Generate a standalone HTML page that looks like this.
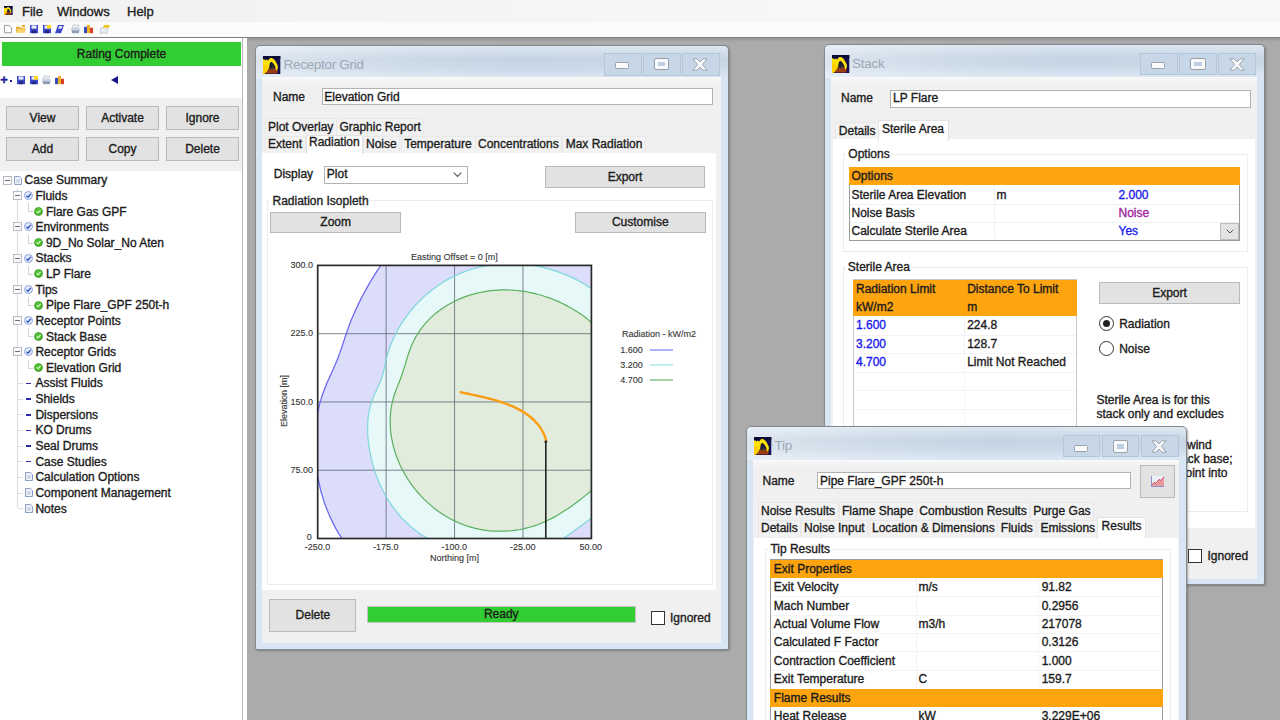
<!DOCTYPE html>
<html><head><meta charset="utf-8"><style>
*{box-sizing:border-box;margin:0;padding:0}
html,body{width:1280px;height:720px;overflow:hidden;background:#ababab;font-family:"Liberation Sans",sans-serif;font-size:12px;color:#1c1c1c;-webkit-text-stroke:0.35px}
.a{position:absolute;white-space:nowrap}
.t{position:absolute;white-space:nowrap;line-height:14px;height:14px}
.s{position:absolute;white-space:nowrap;line-height:10px;height:10px;font-size:9px;color:#333;-webkit-text-stroke:0.1px}
.btn{position:absolute;background:#e2e2e2;border:1px solid #bababa;text-align:center;white-space:nowrap}
.inp{position:absolute;background:#fff;border:1px solid #b2b2b2}
.win{position:absolute;border:1.3px solid #858a90;box-shadow:1px 1px 2px rgba(70,70,70,.45);border-radius:5px 5px 2px 2px;background:linear-gradient(90deg,rgba(255,255,255,.38) 0,rgba(255,255,255,.12) 30%,rgba(255,255,255,0) 55%,rgba(255,255,255,.06) 100%) 0 0/100% 33px no-repeat,linear-gradient(#dbe6f1 0px,#c5d4e3 13px,#c9d8e7 22px,#d9e5f1 31px,#d8e5f3 32px)}
.wc{position:absolute;background:linear-gradient(#f9f9f9 0,#f0f0f0 7px)}
.wb{position:absolute;background:#c7d7e8;border:1px solid #b3c6da}
.ttl{-webkit-text-stroke:0;position:absolute;font-size:13.5px;color:#9ba8b5;white-space:nowrap;letter-spacing:-0.3px;line-height:16px}
.page{position:absolute;background:#fff}
.org{position:absolute;background:#fda40f}
.blue{color:#1a1aee}
.tab{position:absolute;white-space:nowrap;line-height:14px;height:17px;border:1px solid #e6e6e6;border-bottom:none;background:#f1f1f1}
svg{position:absolute;overflow:visible}
</style></head><body>
<div class="a" style="left:0px;top:0px;width:1280px;height:22px;background:linear-gradient(90deg,#f1f1f1,#f7f7f7 60%);"></div>
<div class="a" style="left:0px;top:22px;width:1280px;height:15px;background:#fbfbfb;"></div>
<div class="a" style="left:0px;top:36.6px;width:1280px;height:1.6px;background:#7f7f7f;"></div>
<div class="a" style="left:247px;top:38px;width:1033px;height:4px;background:linear-gradient(#969696,#ababab);"></div>
<div class="t" style="left:22px;top:3.5px;font-size:13px;line-height:16px;height:16px">File</div>
<div class="t" style="left:57px;top:3.5px;font-size:13px;line-height:16px;height:16px">Windows</div>
<div class="t" style="left:127px;top:3.5px;font-size:13px;line-height:16px;height:16px">Help</div>
<svg style="left:4px;top:6px" width="8.65" height="9" viewBox="0 0 17.3 18" preserveAspectRatio="none"><rect width="17.3" height="18" fill="#15114f"/><rect width="17.3" height="3" fill="#0b0b38"/><path d="M7.2 6.8 L9.4 6.4 L11.8 9.6 L12.7 12.8 L13 15 L6 15 Z" fill="#1c1a30"/><path d="M4.6 14 L6.6 12.3 L9 13.2 L10.5 11.5 L12.5 13.3 L14.9 14.4 L14.2 17.4 L2.6 17.4 Z" fill="#9a3c12"/><path d="M8.2 13.2 L9.6 9 L10.6 13.4 Z" fill="#3a3a40"/><path d="M0 3.6 L1.2 3.2 L2.3 4.5 L3.5 3.4 L5.1 4.4 L6.2 2.9 C7 2.2 7.4 2.1 7.8 2.1 C9 2 10 2.6 10.9 3.3 C12 4.2 12.8 5.4 13.2 6.4 C14.2 8 14.8 9.2 14.8 10.3 C15 11.6 14.8 12.8 14.4 13.8 L13.2 14.6 C13 13.8 12.8 13.2 12.5 12.6 C12.4 11.4 12.2 10.4 11.7 9.5 C11 8.2 10.2 7.2 9.3 6.4 C8.6 6 8 6 7.4 6.4 C7 7 6.7 7.6 6.6 8.4 C6.4 9.4 6.3 10.4 6.2 11.5 C6 12.3 5.6 12.9 5.1 13.4 L3.9 15.4 L2.3 16.9 L0.8 18 L0 18 Z" fill="#ffe205"/><path d="M0 9 L3 8 L5 11 L4.5 13.5 L2.3 16.9 L0.8 18 L0 18 Z" fill="#ffd000"/></svg>
<svg style="left:4px;top:25px" width="8" height="8.2" preserveAspectRatio="none" viewBox="0 0 8 9"><path d="M0.5 0.5 H5 L7.5 3 V8.5 H0.5Z" fill="#fff" stroke="#9a9aa5" stroke-width="1"/></svg>
<svg style="left:16px;top:25px" width="10" height="8.2" preserveAspectRatio="none" viewBox="0 0 10 9"><path d="M0 2 H4 L5 3 H9 V8 H0Z" fill="#e8b43a"/><path d="M1.5 4 H10 L8.5 8.5 H0Z" fill="#f6d36a"/><rect x="6" y="0" width="3" height="2" fill="#f2a020"/></svg>
<svg style="left:30px;top:25px" width="8" height="8.2" preserveAspectRatio="none" viewBox="0 0 8 9"><rect width="8" height="9" fill="#3a46c8"/><rect x="1.5" y="0.5" width="5" height="3.5" fill="#e8ecff"/><rect x="2" y="6" width="4" height="3" fill="#23297a"/></svg>
<svg style="left:43px;top:25px" width="8" height="8.2" preserveAspectRatio="none" viewBox="0 0 8 9"><rect width="8" height="9" fill="#3a46c8"/><rect x="1.5" y="0.5" width="5" height="3.5" fill="#e8ecff"/><rect x="4" y="0" width="4" height="4" fill="#ffd820"/><rect x="2" y="6" width="4" height="3" fill="#23297a"/></svg>
<svg style="left:55px;top:25px" width="9" height="8.2" preserveAspectRatio="none" viewBox="0 0 9 9"><path d="M3 0 H9 L6 9 H0Z" fill="#3a46c8"/><path d="M4 1 H7.5 L6.5 4 H3Z" fill="#dfe4ff"/></svg>
<svg style="left:71px;top:25px" width="9" height="8.2" preserveAspectRatio="none" viewBox="0 0 9 9"><path d="M2 0 H8 L7 3 H1Z" fill="#f4f6fa" stroke="#a8b0c0" stroke-width=".6"/><path d="M0 3.5 H9 V7 H0Z" fill="#c9d2e2"/><path d="M1 6 H8 V9 H1Z" fill="#8e9bb8"/></svg>
<svg style="left:84px;top:25px" width="9" height="8.2" preserveAspectRatio="none" viewBox="0 0 9 9"><rect x="0" y="2" width="3" height="7" fill="#3b48c0"/><rect x="3" y="0" width="3" height="9" fill="#f0b020"/><rect x="6" y="3" width="3" height="6" fill="#d8402a"/></svg>
<svg style="left:100px;top:25px" width="10" height="8.2" preserveAspectRatio="none" viewBox="0 0 10 9"><path d="M1 3 H8 L7 9 H0Z" fill="#e9edf6" stroke="#a9b2c6" stroke-width=".6"/><path d="M4 0 H10 L9 3 H3Z" fill="#f2c81e"/></svg>
<div class="a" style="left:0px;top:38px;width:247px;height:682px;background:#fff;"></div>
<div class="a" style="left:242px;top:38px;width:1px;height:682px;background:#b9b9b9;"></div>
<div class="a" style="left:0px;top:98px;width:242px;height:73px;background:#f0f0f0;"></div>
<div class="a" style="left:2px;top:41.6px;width:239px;height:24.2px;background:#32cd32;text-align:center;line-height:25px">Rating Complete</div>
<div class="a" style="left:0.3px;top:73.3px;font-size:13px;font-weight:bold;color:#1a1a9a;line-height:14px">+</div>
<div class="a" style="left:10px;top:80px;width:2px;height:2px;background:#1a1a9a;"></div>
<svg style="left:17px;top:76px" width="8" height="8.2" preserveAspectRatio="none" viewBox="0 0 8 9"><rect width="8" height="9" fill="#3a46c8"/><rect x="1.5" y="0.5" width="5" height="3.5" fill="#e8ecff"/><rect x="2" y="6" width="4" height="3" fill="#23297a"/></svg>
<svg style="left:30px;top:76px" width="8" height="8.2" preserveAspectRatio="none" viewBox="0 0 8 9"><rect width="8" height="9" fill="#3a46c8"/><rect x="1.5" y="0.5" width="5" height="3.5" fill="#e8ecff"/><rect x="4" y="0" width="4" height="4" fill="#ffd820"/><rect x="2" y="6" width="4" height="3" fill="#23297a"/></svg>
<svg style="left:42px;top:76px" width="9" height="8.2" preserveAspectRatio="none" viewBox="0 0 9 9"><path d="M2 0 H8 L7 3 H1Z" fill="#f4f6fa" stroke="#a8b0c0" stroke-width=".6"/><path d="M0 3.5 H9 V7 H0Z" fill="#c9d2e2"/><path d="M1 6 H8 V9 H1Z" fill="#8e9bb8"/></svg>
<svg style="left:55px;top:76px" width="9" height="8.2" preserveAspectRatio="none" viewBox="0 0 9 9"><rect x="0" y="2" width="3" height="7" fill="#3b48c0"/><rect x="3" y="0" width="3" height="9" fill="#f0b020"/><rect x="6" y="3" width="3" height="6" fill="#d8402a"/></svg>
<svg style="left:111px;top:76px" width="7" height="8" viewBox="0 0 7 8"><path d="M7 0 V8 L0 4Z" fill="#17178f"/></svg>
<div class="btn" style="left:6px;top:106px;width:73px;height:24px;line-height:22px">View</div>
<div class="btn" style="left:86px;top:106px;width:73px;height:24px;line-height:22px">Activate</div>
<div class="btn" style="left:166px;top:106px;width:73px;height:24px;line-height:22px">Ignore</div>
<div class="btn" style="left:6px;top:137px;width:73px;height:24px;line-height:22px">Add</div>
<div class="btn" style="left:86px;top:137px;width:73px;height:24px;line-height:22px">Copy</div>
<div class="btn" style="left:166px;top:137px;width:73px;height:24px;line-height:22px">Delete</div>
<div class="a" style="left:17px;top:188px;width:1px;height:320px;background:#dcdcdc;"></div>
<div class="a" style="left:2.5px;top:175.5px;width:9px;height:9px;border:1px solid #b8bcc4;background:#fafafa"></div>
<div class="a" style="left:4.5px;top:179.5px;width:5px;height:1px;background:#6a7080;"></div>
<svg style="left:14px;top:175.5px" width="8" height="9" viewBox="0 0 8 9"><path d="M0.5 0.5 H5.5 L7.5 2.5 V8.5 H0.5Z" fill="#eef2fb" stroke="#8fa0c8" stroke-width="1"/><path d="M2 4H6M2 6H6" stroke="#a9b6d6" stroke-width=".8"/></svg>
<div class="t" style="left:24.6px;top:173.3px;">Case Summary</div>
<div class="a" style="left:12.5px;top:191.13px;width:9px;height:9px;border:1px solid #b8bcc4;background:#fafafa"></div>
<div class="a" style="left:14.5px;top:195.13px;width:5px;height:1px;background:#6a7080;"></div>
<svg style="left:24px;top:191.13px" width="9" height="9" viewBox="0 0 9 9"><circle cx="4.5" cy="4.5" r="4" fill="#e4ecfb" stroke="#8ea4d8" stroke-width="1"/><path d="M2.4 4.6 L4 6.2 L6.8 2.8" fill="none" stroke="#2a4fc0" stroke-width="1.3"/></svg>
<div class="t" style="left:35.4px;top:188.93px;">Fluids</div>
<div class="a" style="left:28px;top:203.26px;width:1px;height:8px;background:#d4d4d4;"></div>
<div class="a" style="left:28px;top:211.26px;width:5px;height:1px;background:#d4d4d4;"></div>
<svg style="left:34px;top:206.76px" width="9" height="9" viewBox="0 0 9 9"><circle cx="4.5" cy="4.5" r="4.3" fill="#2f8f1c"/><circle cx="4.4" cy="4.3" r="3.5" fill="#4fc030"/><path d="M2.6 4.4 L4 5.8 L6.6 2.9" fill="none" stroke="#e8ffd8" stroke-width="1.3" opacity=".85"/></svg>
<div class="t" style="left:45.9px;top:204.56px;">Flare Gas GPF</div>
<div class="a" style="left:12.5px;top:222.39px;width:9px;height:9px;border:1px solid #b8bcc4;background:#fafafa"></div>
<div class="a" style="left:14.5px;top:226.39px;width:5px;height:1px;background:#6a7080;"></div>
<svg style="left:24px;top:222.39px" width="9" height="9" viewBox="0 0 9 9"><circle cx="4.5" cy="4.5" r="4" fill="#e4ecfb" stroke="#8ea4d8" stroke-width="1"/><path d="M2.4 4.6 L4 6.2 L6.8 2.8" fill="none" stroke="#2a4fc0" stroke-width="1.3"/></svg>
<div class="t" style="left:35.4px;top:220.19px;">Environments</div>
<div class="a" style="left:28px;top:234.52px;width:1px;height:8px;background:#d4d4d4;"></div>
<div class="a" style="left:28px;top:242.52px;width:5px;height:1px;background:#d4d4d4;"></div>
<svg style="left:34px;top:238.02px" width="9" height="9" viewBox="0 0 9 9"><circle cx="4.5" cy="4.5" r="4.3" fill="#2f8f1c"/><circle cx="4.4" cy="4.3" r="3.5" fill="#4fc030"/><path d="M2.6 4.4 L4 5.8 L6.6 2.9" fill="none" stroke="#e8ffd8" stroke-width="1.3" opacity=".85"/></svg>
<div class="t" style="left:45.9px;top:235.82px;">9D_No Solar_No Aten</div>
<div class="a" style="left:12.5px;top:253.65px;width:9px;height:9px;border:1px solid #b8bcc4;background:#fafafa"></div>
<div class="a" style="left:14.5px;top:257.65px;width:5px;height:1px;background:#6a7080;"></div>
<svg style="left:24px;top:253.65px" width="9" height="9" viewBox="0 0 9 9"><circle cx="4.5" cy="4.5" r="4" fill="#e4ecfb" stroke="#8ea4d8" stroke-width="1"/><path d="M2.4 4.6 L4 6.2 L6.8 2.8" fill="none" stroke="#2a4fc0" stroke-width="1.3"/></svg>
<div class="t" style="left:35.4px;top:251.45px;">Stacks</div>
<div class="a" style="left:28px;top:265.78px;width:1px;height:8px;background:#d4d4d4;"></div>
<div class="a" style="left:28px;top:273.78px;width:5px;height:1px;background:#d4d4d4;"></div>
<svg style="left:34px;top:269.28px" width="9" height="9" viewBox="0 0 9 9"><circle cx="4.5" cy="4.5" r="4.3" fill="#2f8f1c"/><circle cx="4.4" cy="4.3" r="3.5" fill="#4fc030"/><path d="M2.6 4.4 L4 5.8 L6.6 2.9" fill="none" stroke="#e8ffd8" stroke-width="1.3" opacity=".85"/></svg>
<div class="t" style="left:45.9px;top:267.08px;">LP Flare</div>
<div class="a" style="left:12.5px;top:284.91px;width:9px;height:9px;border:1px solid #b8bcc4;background:#fafafa"></div>
<div class="a" style="left:14.5px;top:288.91px;width:5px;height:1px;background:#6a7080;"></div>
<svg style="left:24px;top:284.91px" width="9" height="9" viewBox="0 0 9 9"><circle cx="4.5" cy="4.5" r="4" fill="#e4ecfb" stroke="#8ea4d8" stroke-width="1"/><path d="M2.4 4.6 L4 6.2 L6.8 2.8" fill="none" stroke="#2a4fc0" stroke-width="1.3"/></svg>
<div class="t" style="left:35.4px;top:282.71px;">Tips</div>
<div class="a" style="left:28px;top:297.04px;width:1px;height:8px;background:#d4d4d4;"></div>
<div class="a" style="left:28px;top:305.04px;width:5px;height:1px;background:#d4d4d4;"></div>
<svg style="left:34px;top:300.54px" width="9" height="9" viewBox="0 0 9 9"><circle cx="4.5" cy="4.5" r="4.3" fill="#2f8f1c"/><circle cx="4.4" cy="4.3" r="3.5" fill="#4fc030"/><path d="M2.6 4.4 L4 5.8 L6.6 2.9" fill="none" stroke="#e8ffd8" stroke-width="1.3" opacity=".85"/></svg>
<div class="t" style="left:45.9px;top:298.34px;">Pipe Flare_GPF 250t-h</div>
<div class="a" style="left:12.5px;top:316.17px;width:9px;height:9px;border:1px solid #b8bcc4;background:#fafafa"></div>
<div class="a" style="left:14.5px;top:320.17px;width:5px;height:1px;background:#6a7080;"></div>
<svg style="left:24px;top:316.17px" width="9" height="9" viewBox="0 0 9 9"><circle cx="4.5" cy="4.5" r="4" fill="#e4ecfb" stroke="#8ea4d8" stroke-width="1"/><path d="M2.4 4.6 L4 6.2 L6.8 2.8" fill="none" stroke="#2a4fc0" stroke-width="1.3"/></svg>
<div class="t" style="left:35.4px;top:313.97px;">Receptor Points</div>
<div class="a" style="left:28px;top:328.3px;width:1px;height:8px;background:#d4d4d4;"></div>
<div class="a" style="left:28px;top:336.3px;width:5px;height:1px;background:#d4d4d4;"></div>
<svg style="left:34px;top:331.8px" width="9" height="9" viewBox="0 0 9 9"><circle cx="4.5" cy="4.5" r="4.3" fill="#2f8f1c"/><circle cx="4.4" cy="4.3" r="3.5" fill="#4fc030"/><path d="M2.6 4.4 L4 5.8 L6.6 2.9" fill="none" stroke="#e8ffd8" stroke-width="1.3" opacity=".85"/></svg>
<div class="t" style="left:45.9px;top:329.6px;">Stack Base</div>
<div class="a" style="left:12.5px;top:347.43px;width:9px;height:9px;border:1px solid #b8bcc4;background:#fafafa"></div>
<div class="a" style="left:14.5px;top:351.43px;width:5px;height:1px;background:#6a7080;"></div>
<svg style="left:24px;top:347.43px" width="9" height="9" viewBox="0 0 9 9"><circle cx="4.5" cy="4.5" r="4" fill="#e4ecfb" stroke="#8ea4d8" stroke-width="1"/><path d="M2.4 4.6 L4 6.2 L6.8 2.8" fill="none" stroke="#2a4fc0" stroke-width="1.3"/></svg>
<div class="t" style="left:35.4px;top:345.23px;">Receptor Grids</div>
<div class="a" style="left:28px;top:359.56px;width:1px;height:8px;background:#d4d4d4;"></div>
<div class="a" style="left:28px;top:367.56px;width:5px;height:1px;background:#d4d4d4;"></div>
<svg style="left:34px;top:363.06px" width="9" height="9" viewBox="0 0 9 9"><circle cx="4.5" cy="4.5" r="4.3" fill="#2f8f1c"/><circle cx="4.4" cy="4.3" r="3.5" fill="#4fc030"/><path d="M2.6 4.4 L4 5.8 L6.6 2.9" fill="none" stroke="#e8ffd8" stroke-width="1.3" opacity=".85"/></svg>
<div class="t" style="left:45.9px;top:360.86px;">Elevation Grid</div>
<div class="a" style="left:18px;top:383.19px;width:5px;height:1px;background:#dcdcdc;"></div>
<div class="a" style="left:25.5px;top:382.69px;width:5px;height:1.6px;background:#2a2aa8;"></div>
<div class="t" style="left:35.4px;top:376.49px;">Assist Fluids</div>
<div class="a" style="left:18px;top:398.82px;width:5px;height:1px;background:#dcdcdc;"></div>
<div class="a" style="left:25.5px;top:398.32px;width:5px;height:1.6px;background:#2a2aa8;"></div>
<div class="t" style="left:35.4px;top:392.12px;">Shields</div>
<div class="a" style="left:18px;top:414.45px;width:5px;height:1px;background:#dcdcdc;"></div>
<div class="a" style="left:25.5px;top:413.95px;width:5px;height:1.6px;background:#2a2aa8;"></div>
<div class="t" style="left:35.4px;top:407.75px;">Dispersions</div>
<div class="a" style="left:18px;top:430.08px;width:5px;height:1px;background:#dcdcdc;"></div>
<div class="a" style="left:25.5px;top:429.58px;width:5px;height:1.6px;background:#2a2aa8;"></div>
<div class="t" style="left:35.4px;top:423.38px;">KO Drums</div>
<div class="a" style="left:18px;top:445.71px;width:5px;height:1px;background:#dcdcdc;"></div>
<div class="a" style="left:25.5px;top:445.21px;width:5px;height:1.6px;background:#2a2aa8;"></div>
<div class="t" style="left:35.4px;top:439.01px;">Seal Drums</div>
<div class="a" style="left:18px;top:461.34px;width:5px;height:1px;background:#dcdcdc;"></div>
<div class="a" style="left:25.5px;top:460.84px;width:5px;height:1.6px;background:#2a2aa8;"></div>
<div class="t" style="left:35.4px;top:454.64px;">Case Studies</div>
<div class="a" style="left:18px;top:476.97px;width:5px;height:1px;background:#dcdcdc;"></div>
<svg style="left:24.5px;top:472.47px" width="8" height="9" viewBox="0 0 8 9"><path d="M0.5 0.5 H5.5 L7.5 2.5 V8.5 H0.5Z" fill="#eef2fb" stroke="#8fa0c8" stroke-width="1"/><path d="M2 4H6M2 6H6" stroke="#a9b6d6" stroke-width=".8"/></svg>
<div class="t" style="left:35.4px;top:470.27px;">Calculation Options</div>
<div class="a" style="left:18px;top:492.6px;width:5px;height:1px;background:#dcdcdc;"></div>
<svg style="left:24.5px;top:488.1px" width="8" height="9" viewBox="0 0 8 9"><path d="M0.5 0.5 H5.5 L7.5 2.5 V8.5 H0.5Z" fill="#eef2fb" stroke="#8fa0c8" stroke-width="1"/><path d="M2 4H6M2 6H6" stroke="#a9b6d6" stroke-width=".8"/></svg>
<div class="t" style="left:35.4px;top:485.9px;">Component Management</div>
<div class="a" style="left:18px;top:508.23px;width:5px;height:1px;background:#dcdcdc;"></div>
<svg style="left:24.5px;top:503.73px" width="8" height="9" viewBox="0 0 8 9"><path d="M0.5 0.5 H5.5 L7.5 2.5 V8.5 H0.5Z" fill="#eef2fb" stroke="#8fa0c8" stroke-width="1"/><path d="M2 4H6M2 6H6" stroke="#a9b6d6" stroke-width=".8"/></svg>
<div class="t" style="left:35.4px;top:501.53px;">Notes</div>
<div class="win" style="left:255px;top:45px;width:473.7px;height:605.3px"></div>
<svg style="left:263.2px;top:55.6px" width="17.3" height="18" viewBox="0 0 17.3 18" preserveAspectRatio="none"><rect width="17.3" height="18" fill="#15114f"/><rect width="17.3" height="3" fill="#0b0b38"/><path d="M7.2 6.8 L9.4 6.4 L11.8 9.6 L12.7 12.8 L13 15 L6 15 Z" fill="#1c1a30"/><path d="M4.6 14 L6.6 12.3 L9 13.2 L10.5 11.5 L12.5 13.3 L14.9 14.4 L14.2 17.4 L2.6 17.4 Z" fill="#9a3c12"/><path d="M8.2 13.2 L9.6 9 L10.6 13.4 Z" fill="#3a3a40"/><path d="M0 3.6 L1.2 3.2 L2.3 4.5 L3.5 3.4 L5.1 4.4 L6.2 2.9 C7 2.2 7.4 2.1 7.8 2.1 C9 2 10 2.6 10.9 3.3 C12 4.2 12.8 5.4 13.2 6.4 C14.2 8 14.8 9.2 14.8 10.3 C15 11.6 14.8 12.8 14.4 13.8 L13.2 14.6 C13 13.8 12.8 13.2 12.5 12.6 C12.4 11.4 12.2 10.4 11.7 9.5 C11 8.2 10.2 7.2 9.3 6.4 C8.6 6 8 6 7.4 6.4 C7 7 6.7 7.6 6.6 8.4 C6.4 9.4 6.3 10.4 6.2 11.5 C6 12.3 5.6 12.9 5.1 13.4 L3.9 15.4 L2.3 16.9 L0.8 18 L0 18 Z" fill="#ffe205"/><path d="M0 9 L3 8 L5 11 L4.5 13.5 L2.3 16.9 L0.8 18 L0 18 Z" fill="#ffd000"/></svg>
<div class="ttl" style="left:283.5px;top:57.3px">Receptor Grid</div>
<div class="wb" style="left:604px;top:52.5px;width:37.5px;height:23.2px"></div>
<div class="a" style="left:615.25px;top:62.3px;width:14px;height:7px;background:#fafafa;border:1px solid #9aa3ad;border-radius:1.5px"></div>
<div class="wb" style="left:642.5px;top:52.5px;width:38px;height:23.2px"></div>
<div class="a" style="left:654.9px;top:58.5px;width:13.6px;height:10.6px;background:#bccfe3;border:3px solid #fafafa;outline:1px solid #9aa3ad;border-radius:1px"></div>
<div class="wb" style="left:681.5px;top:52.5px;width:38.5px;height:23.2px"></div>
<svg style="left:692.45px;top:57.5px" width="16" height="13" viewBox="0 0 16 13"><path d="M0.8 0.8 L5 0.8 L8 4 L11 0.8 L15.2 0.8 L10.3 6.5 L15.2 12.2 L11 12.2 L8 9 L5 12.2 L0.8 12.2 L5.7 6.5 Z" fill="#fafafa" stroke="#9aa3ad" stroke-width="1"/></svg>
<div class="wc" style="left:262px;top:77px;width:459px;height:566px"></div>
<div class="t" style="left:273px;top:90.2px;">Name</div>
<div class="inp" style="left:322px;top:87.5px;width:391px;height:17.5px"></div>
<div class="t" style="left:324.3px;top:90px;">Elevation Grid</div>
<div class="a" style="left:264.5px;top:118.3px;width:72.352px;height:17px;background:#f2f2f2;border:1px solid #e8e8e8;border-bottom:none"></div>
<div class="t" style="left:268px;top:119.8px;">Plot Overlay</div>
<div class="a" style="left:335.9px;top:118.3px;width:88.36px;height:17px;background:#f2f2f2;border:1px solid #e8e8e8;border-bottom:none"></div>
<div class="t" style="left:339.4px;top:119.8px;">Graphic Report</div>
<div class="a" style="left:264.5px;top:135.5px;width:41.02px;height:17px;background:#f2f2f2;border:1px solid #e8e8e8;border-bottom:none"></div>
<div class="t" style="left:268px;top:137px;">Extent</div>
<div class="a" style="left:362.5px;top:135.5px;width:37.672px;height:17px;background:#f2f2f2;border:1px solid #e8e8e8;border-bottom:none"></div>
<div class="t" style="left:366px;top:137px;">Noise</div>
<div class="a" style="left:400.7px;top:135.5px;width:75.688px;height:17px;background:#f2f2f2;border:1px solid #e8e8e8;border-bottom:none"></div>
<div class="t" style="left:404.2px;top:137px;">Temperature</div>
<div class="a" style="left:474.5px;top:135.5px;width:87.7px;height:17px;background:#f2f2f2;border:1px solid #e8e8e8;border-bottom:none"></div>
<div class="t" style="left:478px;top:137px;">Concentrations</div>
<div class="a" style="left:562.2px;top:135.5px;width:83.692px;height:17px;background:#f2f2f2;border:1px solid #e8e8e8;border-bottom:none"></div>
<div class="t" style="left:565.7px;top:137px;">Max Radiation</div>
<div class="page" style="left:262.3px;top:152.5px;width:454.2px;height:437.5px"></div>
<div class="a" style="left:266.5px;top:200px;width:446px;height:384.7px;border:1px solid #ededed"></div>
<div class="a" style="left:270px;top:194px;width:95px;height:13px;background:#fff"></div>
<div class="a" style="left:306px;top:134.7px;width:56.688px;height:19.3px;background:#fff;border:1px solid #e3e3e3;border-bottom:none"></div>
<div class="t" style="left:309px;top:134.7px;">Radiation</div>
<div class="t" style="left:273.75px;top:166.7px;">Display</div>
<div class="inp" style="left:324px;top:165.5px;width:143.5px;height:18.5px"></div>
<div class="t" style="left:326.8px;top:166.7px;">Plot</div>
<svg style="left:453px;top:172px" width="9" height="6" viewBox="0 0 9 6"><path d="M0.7 0.7 L4.5 4.5 L8.3 0.7" fill="none" stroke="#555" stroke-width="1.1"/></svg>
<div class="btn" style="left:545px;top:165.5px;width:160px;height:22px;line-height:20px">Export</div>
<div class="t" style="left:272.5px;top:193.8px;">Radiation Isopleth</div>
<div class="btn" style="left:270px;top:211.5px;width:131.3px;height:21.8px;line-height:19.8px">Zoom</div>
<div class="btn" style="left:574.8px;top:211.5px;width:130.9px;height:21.8px;line-height:19.8px">Customise</div>
<svg style="left:0;top:0" width="1280" height="720" viewBox="0 0 1280 720"><defs><clipPath id="pc"><rect x="317.7" y="265.4" width="273.7" height="273.1"/></clipPath></defs>
<g clip-path="url(#pc)">
<rect x="317.7" y="265.4" width="273.7" height="273.1" fill="#fff"/>
<path d="M386.3 257.1 L385.0 259.0 L383.7 260.9 L382.4 262.8 L381.2 264.7 L379.9 266.6 L378.7 268.5 L377.4 270.4 L376.2 272.3 L375.0 274.2 L373.8 276.2 L372.6 278.1 L371.4 280.0 L370.3 282.0 L369.1 283.9 L368.0 285.9 L366.9 287.9 L365.8 289.9 L364.7 291.8 L363.6 293.8 L362.6 295.8 L361.5 297.8 L360.5 299.9 L359.5 301.9 L358.5 303.9 L357.5 306.0 L356.5 308.0 L355.6 310.0 L354.7 312.1 L353.8 314.2 L352.9 316.2 L352.0 318.3 L351.1 320.4 L350.3 322.5 L349.5 324.6 L348.7 326.7 L347.9 328.9 L347.2 331.0 L346.4 333.1 L345.7 335.3 L345.0 337.4 L344.3 339.6 L343.6 341.7 L342.9 343.9 L342.2 346.0 L341.5 348.2 L340.7 350.3 L340.0 352.4 L339.2 354.6 L338.5 356.7 L337.6 358.8 L336.8 360.9 L335.9 363.0 L335.0 365.1 L334.1 367.1 L333.2 369.2 L332.3 371.2 L331.4 373.3 L330.4 375.4 L329.5 377.4 L328.6 379.5 L327.6 381.5 L326.7 383.6 L325.9 385.7 L325.0 387.8 L324.2 389.9 L323.4 392.0 L322.7 394.1 L321.9 396.2 L321.3 398.4 L320.6 400.5 L320.0 402.7 L319.4 404.9 L318.9 407.1 L318.4 409.3 L317.9 411.5 L317.5 413.7 L317.1 415.9 L316.7 418.2 L316.3 420.4 L316.0 422.6 L315.8 424.9 L315.5 427.2 L315.3 429.4 L315.1 431.7 L315.0 434.0 L314.9 436.2 L314.8 438.5 L314.7 440.8 L314.7 443.1 L314.7 445.3 L314.8 447.6 L314.8 449.9 L314.9 452.2 L315.0 454.5 L315.2 456.7 L315.4 459.0 L315.6 461.3 L315.8 463.5 L316.1 465.8 L316.4 468.1 L316.7 470.3 L317.0 472.6 L317.4 474.8 L317.8 477.0 L318.2 479.3 L318.7 481.5 L319.2 483.7 L319.7 485.9 L320.2 488.1 L320.7 490.3 L321.3 492.5 L321.9 494.6 L322.6 496.8 L323.2 498.9 L323.9 501.1 L324.6 503.2 L325.4 505.3 L326.2 507.4 L327.0 509.5 L327.8 511.6 L328.7 513.7 L329.6 515.7 L330.5 517.8 L331.4 519.8 L332.4 521.9 L333.4 523.9 L334.5 525.9 L335.5 527.9 L336.6 529.8 L337.8 531.8 L338.9 533.8 L340.1 535.7 L341.3 537.6 L342.6 539.5 L343.9 541.4 L345.2 543.3 L346.6 545.2 L348.0 547.0 L349.4 548.9 L700 549 L700 200 L386 200 Z" fill="#dcdcfb"/>
<path d="M602.0 296.9 L599.6 294.9 L597.2 293.0 L594.8 291.2 L592.3 289.4 L589.8 287.6 L587.2 286.0 L584.6 284.3 L582.0 282.8 L579.3 281.3 L576.5 279.8 L573.8 278.4 L571.0 277.1 L568.2 275.8 L565.3 274.6 L562.5 273.5 L559.6 272.4 L556.6 271.4 L553.7 270.4 L550.7 269.5 L547.7 268.7 L544.7 267.9 L541.7 267.2 L538.7 266.5 L535.6 265.9 L532.5 265.4 L529.5 265.0 L526.4 264.6 L523.3 264.3 L520.2 264.0 L517.1 263.8 L514.0 263.7 L510.9 263.7 L507.8 263.7 L504.7 263.8 L501.7 263.9 L498.6 264.2 L495.5 264.4 L492.5 264.8 L489.4 265.2 L486.4 265.7 L483.3 266.3 L480.3 267.0 L477.4 267.7 L474.4 268.5 L471.4 269.3 L468.5 270.3 L465.6 271.3 L462.7 272.4 L459.9 273.5 L457.1 274.8 L454.3 276.1 L451.5 277.5 L448.8 278.9 L446.1 280.4 L443.5 282.0 L440.9 283.7 L438.3 285.4 L435.8 287.2 L433.3 289.0 L430.8 290.9 L428.4 292.8 L426.1 294.9 L423.8 296.9 L421.5 299.0 L419.3 301.2 L417.1 303.5 L415.0 305.7 L413.0 308.0 L411.0 310.4 L409.1 312.8 L407.2 315.3 L405.4 317.8 L403.6 320.3 L401.9 322.9 L400.3 325.5 L398.7 328.2 L397.2 330.9 L395.8 333.6 L394.4 336.4 L393.2 339.2 L391.9 342.0 L390.8 344.8 L389.7 347.7 L388.8 350.6 L387.8 353.5 L387.0 356.5 L386.3 359.4 L385.6 362.4 L384.9 365.4 L384.3 368.4 L383.6 371.3 L382.8 374.3 L381.9 377.2 L380.8 380.1 L379.7 383.0 L378.5 385.8 L377.2 388.7 L375.9 391.5 L374.6 394.3 L373.4 397.2 L372.3 400.1 L371.3 403.0 L370.4 405.9 L369.7 408.8 L369.0 411.8 L368.5 414.8 L368.1 417.8 L367.9 420.8 L367.7 423.8 L367.6 426.9 L367.6 429.9 L367.7 433.0 L367.8 436.0 L368.1 439.1 L368.4 442.2 L368.8 445.3 L369.2 448.3 L369.8 451.4 L370.4 454.4 L371.0 457.5 L371.7 460.5 L372.5 463.5 L373.4 466.5 L374.3 469.5 L375.3 472.5 L376.3 475.5 L377.4 478.4 L378.6 481.3 L379.9 484.1 L381.2 487.0 L382.5 489.8 L384.0 492.5 L385.5 495.3 L387.0 498.0 L388.6 500.6 L390.3 503.2 L392.1 505.8 L393.9 508.3 L395.7 510.7 L397.6 513.1 L399.6 515.5 L401.6 517.8 L403.7 520.0 L405.9 522.2 L408.1 524.3 L410.4 526.4 L412.7 528.3 L415.1 530.2 L417.5 532.1 L420.0 533.8 L422.6 535.5 L425.2 537.1 L427.9 538.6 L430.6 540.1 L433.4 541.4 L436.2 542.7 L439.1 543.9 L442.0 545.0 L445.0 545.9 L552.0 547.0 L563.5 538.5 L575.0 530.2 L590.6 518.8 L602.0 510.0 Z" fill="#e6f8f8"/>
<path d="M601.8 332.2 L599.3 329.5 L596.6 326.9 L593.8 324.4 L591.0 322.0 L588.1 319.6 L585.2 317.3 L582.2 315.1 L579.1 313.0 L576.0 311.0 L572.8 309.0 L569.5 307.2 L566.2 305.4 L562.9 303.7 L559.5 302.1 L556.1 300.6 L552.7 299.2 L549.2 297.9 L545.6 296.7 L542.1 295.5 L538.5 294.5 L534.9 293.6 L531.3 292.8 L527.6 292.0 L524.0 291.4 L520.3 290.9 L516.6 290.5 L512.9 290.2 L509.2 290.0 L505.5 289.9 L501.8 289.9 L498.2 290.1 L494.5 290.3 L490.8 290.7 L487.1 291.2 L483.5 291.8 L479.9 292.5 L476.3 293.3 L472.7 294.3 L469.1 295.4 L465.6 296.6 L462.1 297.9 L458.6 299.4 L455.2 301.0 L451.8 302.7 L448.5 304.5 L445.3 306.4 L442.2 308.5 L439.1 310.7 L436.1 313.0 L433.3 315.4 L430.5 317.9 L427.9 320.6 L425.4 323.3 L423.1 326.2 L420.8 329.1 L418.8 332.1 L416.8 335.3 L415.0 338.4 L413.3 341.7 L411.8 345.0 L410.4 348.4 L409.2 351.8 L408.0 355.3 L406.9 358.8 L405.8 362.3 L404.8 365.9 L403.7 369.4 L402.5 373.0 L401.3 376.5 L400.0 380.0 L398.6 383.6 L397.1 387.1 L395.8 390.7 L394.5 394.2 L393.4 397.8 L392.5 401.4 L391.7 405.0 L391.1 408.7 L390.7 412.3 L390.4 416.0 L390.2 419.6 L390.2 423.3 L390.3 427.0 L390.6 430.6 L391.0 434.2 L391.6 437.9 L392.3 441.5 L393.1 445.1 L394.0 448.6 L395.1 452.2 L396.3 455.7 L397.6 459.1 L399.0 462.5 L400.5 465.9 L402.2 469.3 L404.0 472.6 L405.8 475.8 L407.8 479.0 L409.9 482.1 L412.0 485.1 L414.3 488.1 L416.6 491.0 L419.1 493.9 L421.6 496.7 L424.2 499.3 L426.9 501.9 L429.7 504.4 L432.6 506.9 L435.5 509.2 L438.5 511.4 L441.6 513.5 L444.7 515.6 L447.9 517.5 L451.2 519.2 L454.5 520.9 L457.9 522.5 L461.3 523.9 L464.8 525.2 L468.3 526.4 L471.8 527.4 L475.4 528.4 L479.1 529.2 L482.7 529.8 L486.4 530.4 L490.1 530.8 L493.8 531.1 L497.5 531.2 L501.3 531.2 L505.0 531.1 L508.7 530.9 L512.4 530.6 L516.1 530.1 L519.8 529.5 L523.4 528.8 L527.0 527.9 L530.6 527.0 L534.2 525.9 L537.7 524.7 L541.1 523.3 L544.6 521.9 L547.9 520.3 L551.3 518.6 L554.6 516.9 L557.8 515.0 L561.0 513.1 L564.2 511.1 L567.3 509.1 L570.4 506.9 L573.5 504.7 L576.5 502.5 L579.5 500.2 L582.4 497.9 L585.3 495.6 L588.2 493.2 L591.0 490.8 L593.9 488.4 L596.6 486.0 L599.4 483.7 L602.1 481.3 Z" fill="#e1ecdd"/>
<line x1="386.125" y1="265.4" x2="386.125" y2="538.5" stroke="#55606a" stroke-width="1" opacity=".75"/>
<line x1="317.7" y1="333.675" x2="591.4" y2="333.675" stroke="#55606a" stroke-width="1" opacity=".75"/>
<line x1="454.55" y1="265.4" x2="454.55" y2="538.5" stroke="#55606a" stroke-width="1" opacity=".75"/>
<line x1="317.7" y1="401.95" x2="591.4" y2="401.95" stroke="#55606a" stroke-width="1" opacity=".75"/>
<line x1="522.975" y1="265.4" x2="522.975" y2="538.5" stroke="#55606a" stroke-width="1" opacity=".75"/>
<line x1="317.7" y1="470.225" x2="591.4" y2="470.225" stroke="#55606a" stroke-width="1" opacity=".75"/>
<path d="M386.3 257.1 L385.0 259.0 L383.7 260.9 L382.4 262.8 L381.2 264.7 L379.9 266.6 L378.7 268.5 L377.4 270.4 L376.2 272.3 L375.0 274.2 L373.8 276.2 L372.6 278.1 L371.4 280.0 L370.3 282.0 L369.1 283.9 L368.0 285.9 L366.9 287.9 L365.8 289.9 L364.7 291.8 L363.6 293.8 L362.6 295.8 L361.5 297.8 L360.5 299.9 L359.5 301.9 L358.5 303.9 L357.5 306.0 L356.5 308.0 L355.6 310.0 L354.7 312.1 L353.8 314.2 L352.9 316.2 L352.0 318.3 L351.1 320.4 L350.3 322.5 L349.5 324.6 L348.7 326.7 L347.9 328.9 L347.2 331.0 L346.4 333.1 L345.7 335.3 L345.0 337.4 L344.3 339.6 L343.6 341.7 L342.9 343.9 L342.2 346.0 L341.5 348.2 L340.7 350.3 L340.0 352.4 L339.2 354.6 L338.5 356.7 L337.6 358.8 L336.8 360.9 L335.9 363.0 L335.0 365.1 L334.1 367.1 L333.2 369.2 L332.3 371.2 L331.4 373.3 L330.4 375.4 L329.5 377.4 L328.6 379.5 L327.6 381.5 L326.7 383.6 L325.9 385.7 L325.0 387.8 L324.2 389.9 L323.4 392.0 L322.7 394.1 L321.9 396.2 L321.3 398.4 L320.6 400.5 L320.0 402.7 L319.4 404.9 L318.9 407.1 L318.4 409.3 L317.9 411.5 L317.5 413.7 L317.1 415.9 L316.7 418.2 L316.3 420.4 L316.0 422.6 L315.8 424.9 L315.5 427.2 L315.3 429.4 L315.1 431.7 L315.0 434.0 L314.9 436.2 L314.8 438.5 L314.7 440.8 L314.7 443.1 L314.7 445.3 L314.8 447.6 L314.8 449.9 L314.9 452.2 L315.0 454.5 L315.2 456.7 L315.4 459.0 L315.6 461.3 L315.8 463.5 L316.1 465.8 L316.4 468.1 L316.7 470.3 L317.0 472.6 L317.4 474.8 L317.8 477.0 L318.2 479.3 L318.7 481.5 L319.2 483.7 L319.7 485.9 L320.2 488.1 L320.7 490.3 L321.3 492.5 L321.9 494.6 L322.6 496.8 L323.2 498.9 L323.9 501.1 L324.6 503.2 L325.4 505.3 L326.2 507.4 L327.0 509.5 L327.8 511.6 L328.7 513.7 L329.6 515.7 L330.5 517.8 L331.4 519.8 L332.4 521.9 L333.4 523.9 L334.5 525.9 L335.5 527.9 L336.6 529.8 L337.8 531.8 L338.9 533.8 L340.1 535.7 L341.3 537.6 L342.6 539.5 L343.9 541.4 L345.2 543.3 L346.6 545.2 L348.0 547.0 L349.4 548.9" fill="none" stroke="#6a6af0" stroke-width="1.3"/>
<path d="M602.0 296.9 L599.6 294.9 L597.2 293.0 L594.8 291.2 L592.3 289.4 L589.8 287.6 L587.2 286.0 L584.6 284.3 L582.0 282.8 L579.3 281.3 L576.5 279.8 L573.8 278.4 L571.0 277.1 L568.2 275.8 L565.3 274.6 L562.5 273.5 L559.6 272.4 L556.6 271.4 L553.7 270.4 L550.7 269.5 L547.7 268.7 L544.7 267.9 L541.7 267.2 L538.7 266.5 L535.6 265.9 L532.5 265.4 L529.5 265.0 L526.4 264.6 L523.3 264.3 L520.2 264.0 L517.1 263.8 L514.0 263.7 L510.9 263.7 L507.8 263.7 L504.7 263.8 L501.7 263.9 L498.6 264.2 L495.5 264.4 L492.5 264.8 L489.4 265.2 L486.4 265.7 L483.3 266.3 L480.3 267.0 L477.4 267.7 L474.4 268.5 L471.4 269.3 L468.5 270.3 L465.6 271.3 L462.7 272.4 L459.9 273.5 L457.1 274.8 L454.3 276.1 L451.5 277.5 L448.8 278.9 L446.1 280.4 L443.5 282.0 L440.9 283.7 L438.3 285.4 L435.8 287.2 L433.3 289.0 L430.8 290.9 L428.4 292.8 L426.1 294.9 L423.8 296.9 L421.5 299.0 L419.3 301.2 L417.1 303.5 L415.0 305.7 L413.0 308.0 L411.0 310.4 L409.1 312.8 L407.2 315.3 L405.4 317.8 L403.6 320.3 L401.9 322.9 L400.3 325.5 L398.7 328.2 L397.2 330.9 L395.8 333.6 L394.4 336.4 L393.2 339.2 L391.9 342.0 L390.8 344.8 L389.7 347.7 L388.8 350.6 L387.8 353.5 L387.0 356.5 L386.3 359.4 L385.6 362.4 L384.9 365.4 L384.3 368.4 L383.6 371.3 L382.8 374.3 L381.9 377.2 L380.8 380.1 L379.7 383.0 L378.5 385.8 L377.2 388.7 L375.9 391.5 L374.6 394.3 L373.4 397.2 L372.3 400.1 L371.3 403.0 L370.4 405.9 L369.7 408.8 L369.0 411.8 L368.5 414.8 L368.1 417.8 L367.9 420.8 L367.7 423.8 L367.6 426.9 L367.6 429.9 L367.7 433.0 L367.8 436.0 L368.1 439.1 L368.4 442.2 L368.8 445.3 L369.2 448.3 L369.8 451.4 L370.4 454.4 L371.0 457.5 L371.7 460.5 L372.5 463.5 L373.4 466.5 L374.3 469.5 L375.3 472.5 L376.3 475.5 L377.4 478.4 L378.6 481.3 L379.9 484.1 L381.2 487.0 L382.5 489.8 L384.0 492.5 L385.5 495.3 L387.0 498.0 L388.6 500.6 L390.3 503.2 L392.1 505.8 L393.9 508.3 L395.7 510.7 L397.6 513.1 L399.6 515.5 L401.6 517.8 L403.7 520.0 L405.9 522.2 L408.1 524.3 L410.4 526.4 L412.7 528.3 L415.1 530.2 L417.5 532.1 L420.0 533.8 L422.6 535.5 L425.2 537.1 L427.9 538.6 L430.6 540.1 L433.4 541.4 L436.2 542.7 L439.1 543.9 L442.0 545.0 L445.0 545.9 M552.0 547.0 L563.5 538.5 L575.0 530.2 L590.6 518.8 L602.0 510.0" fill="none" stroke="#7fd8dc" stroke-width="1.2"/>
<path d="M601.8 332.2 L599.3 329.5 L596.6 326.9 L593.8 324.4 L591.0 322.0 L588.1 319.6 L585.2 317.3 L582.2 315.1 L579.1 313.0 L576.0 311.0 L572.8 309.0 L569.5 307.2 L566.2 305.4 L562.9 303.7 L559.5 302.1 L556.1 300.6 L552.7 299.2 L549.2 297.9 L545.6 296.7 L542.1 295.5 L538.5 294.5 L534.9 293.6 L531.3 292.8 L527.6 292.0 L524.0 291.4 L520.3 290.9 L516.6 290.5 L512.9 290.2 L509.2 290.0 L505.5 289.9 L501.8 289.9 L498.2 290.1 L494.5 290.3 L490.8 290.7 L487.1 291.2 L483.5 291.8 L479.9 292.5 L476.3 293.3 L472.7 294.3 L469.1 295.4 L465.6 296.6 L462.1 297.9 L458.6 299.4 L455.2 301.0 L451.8 302.7 L448.5 304.5 L445.3 306.4 L442.2 308.5 L439.1 310.7 L436.1 313.0 L433.3 315.4 L430.5 317.9 L427.9 320.6 L425.4 323.3 L423.1 326.2 L420.8 329.1 L418.8 332.1 L416.8 335.3 L415.0 338.4 L413.3 341.7 L411.8 345.0 L410.4 348.4 L409.2 351.8 L408.0 355.3 L406.9 358.8 L405.8 362.3 L404.8 365.9 L403.7 369.4 L402.5 373.0 L401.3 376.5 L400.0 380.0 L398.6 383.6 L397.1 387.1 L395.8 390.7 L394.5 394.2 L393.4 397.8 L392.5 401.4 L391.7 405.0 L391.1 408.7 L390.7 412.3 L390.4 416.0 L390.2 419.6 L390.2 423.3 L390.3 427.0 L390.6 430.6 L391.0 434.2 L391.6 437.9 L392.3 441.5 L393.1 445.1 L394.0 448.6 L395.1 452.2 L396.3 455.7 L397.6 459.1 L399.0 462.5 L400.5 465.9 L402.2 469.3 L404.0 472.6 L405.8 475.8 L407.8 479.0 L409.9 482.1 L412.0 485.1 L414.3 488.1 L416.6 491.0 L419.1 493.9 L421.6 496.7 L424.2 499.3 L426.9 501.9 L429.7 504.4 L432.6 506.9 L435.5 509.2 L438.5 511.4 L441.6 513.5 L444.7 515.6 L447.9 517.5 L451.2 519.2 L454.5 520.9 L457.9 522.5 L461.3 523.9 L464.8 525.2 L468.3 526.4 L471.8 527.4 L475.4 528.4 L479.1 529.2 L482.7 529.8 L486.4 530.4 L490.1 530.8 L493.8 531.1 L497.5 531.2 L501.3 531.2 L505.0 531.1 L508.7 530.9 L512.4 530.6 L516.1 530.1 L519.8 529.5 L523.4 528.8 L527.0 527.9 L530.6 527.0 L534.2 525.9 L537.7 524.7 L541.1 523.3 L544.6 521.9 L547.9 520.3 L551.3 518.6 L554.6 516.9 L557.8 515.0 L561.0 513.1 L564.2 511.1 L567.3 509.1 L570.4 506.9 L573.5 504.7 L576.5 502.5 L579.5 500.2 L582.4 497.9 L585.3 495.6 L588.2 493.2 L591.0 490.8 L593.9 488.4 L596.6 486.0 L599.4 483.7 L602.1 481.3" fill="none" stroke="#5bb05e" stroke-width="1.2"/>
</g>
<line x1="545.8" y1="441" x2="545.8" y2="538.5" stroke="#222" stroke-width="1.6"/>
<path d="M460.6 392.2 L463.0 392.8 L465.5 393.3 L468.0 393.8 L470.5 394.3 L473.1 394.9 L475.7 395.4 L478.3 396.0 L480.9 396.6 L483.5 397.2 L486.1 397.8 L488.8 398.5 L491.4 399.1 L494.0 399.9 L496.7 400.6 L499.3 401.4 L501.8 402.3 L504.4 403.1 L507.0 404.1 L509.5 405.1 L512.0 406.1 L514.4 407.2 L516.8 408.4 L519.2 409.6 L521.5 410.9 L523.8 412.2 L526.0 413.7 L528.1 415.2 L530.2 416.8 L532.1 418.5 L534.0 420.2 L535.8 422.1 L537.5 424.0 L539.2 426.1 L540.6 428.2 L542.0 430.5 L543.3 432.9 L544.4 435.3 L545.4 437.9 L546.2 440.6" fill="none" stroke="#fb9d12" stroke-width="2.4" stroke-linecap="round"/>
<circle cx="545.8" cy="441.8" r="1.4" fill="#222"/>
<rect x="317.7" y="265.4" width="273.7" height="273.1" fill="none" stroke="#2a2a2a" stroke-width="1.7"/>
<line x1="649.7" y1="350" x2="673" y2="350" stroke="#7070f0" stroke-width="1.1"/>
<line x1="649.7" y1="364.9" x2="673" y2="364.9" stroke="#8fe0e0" stroke-width="1.1"/>
<line x1="649.7" y1="380" x2="673" y2="380" stroke="#5bb05e" stroke-width="1.1"/>
</svg>
<div class="s" style="left:290.482px;top:260.1px;">300.0</div>
<div class="s" style="left:290.482px;top:328.375px;">225.0</div>
<div class="s" style="left:290.482px;top:396.65px;">150.0</div>
<div class="s" style="left:290.482px;top:464.925px;">75.00</div>
<div class="s" style="left:306.696px;top:531.6px;">0</div>
<div class="s" style="left:304.642px;top:541.7px;">-250.0</div>
<div class="s" style="left:373.067px;top:541.7px;">-175.0</div>
<div class="s" style="left:441.492px;top:541.7px;">-100.0</div>
<div class="s" style="left:509.917px;top:541.7px;">-25.00</div>
<div class="s" style="left:579.541px;top:541.7px;">50.00</div>
<div class="s" style="left:411.102px;top:252.3px;">Easting Offset = 0 [m]</div>
<div class="s" style="left:429.993px;top:553.4px;">Northing [m]</div>
<div class="s" style="left:254px;top:396.4px;width:60px;text-align:center;transform:rotate(-90deg)">Elevation [m]</div>
<div class="s" style="left:622px;top:329px;">Radiation - kW/m2</div>
<div class="s" style="left:620.3px;top:344.5px;">1.600</div>
<div class="s" style="left:620.3px;top:359.8px;">3.200</div>
<div class="s" style="left:620.3px;top:375px;">4.700</div>
<div class="btn" style="left:269.3px;top:599px;width:87.2px;height:32.6px;line-height:30.6px">Delete</div>
<div class="a" style="left:366.5px;top:605.5px;width:269.5px;height:17.5px;background:#32cd32;border:1px solid #c4c4c4;text-align:center;line-height:15.7px">Ready</div>
<div class="a" style="left:650.5px;top:610.8px;width:14.3px;height:14.3px;background:#fff;border:1.3px solid #333"></div>
<div class="t" style="left:670px;top:611.3px;">Ignored</div>
<div class="win" style="left:823.6px;top:44px;width:441px;height:541.3px"></div>
<svg style="left:831.8px;top:54.6px" width="17.3" height="18" viewBox="0 0 17.3 18" preserveAspectRatio="none"><rect width="17.3" height="18" fill="#15114f"/><rect width="17.3" height="3" fill="#0b0b38"/><path d="M7.2 6.8 L9.4 6.4 L11.8 9.6 L12.7 12.8 L13 15 L6 15 Z" fill="#1c1a30"/><path d="M4.6 14 L6.6 12.3 L9 13.2 L10.5 11.5 L12.5 13.3 L14.9 14.4 L14.2 17.4 L2.6 17.4 Z" fill="#9a3c12"/><path d="M8.2 13.2 L9.6 9 L10.6 13.4 Z" fill="#3a3a40"/><path d="M0 3.6 L1.2 3.2 L2.3 4.5 L3.5 3.4 L5.1 4.4 L6.2 2.9 C7 2.2 7.4 2.1 7.8 2.1 C9 2 10 2.6 10.9 3.3 C12 4.2 12.8 5.4 13.2 6.4 C14.2 8 14.8 9.2 14.8 10.3 C15 11.6 14.8 12.8 14.4 13.8 L13.2 14.6 C13 13.8 12.8 13.2 12.5 12.6 C12.4 11.4 12.2 10.4 11.7 9.5 C11 8.2 10.2 7.2 9.3 6.4 C8.6 6 8 6 7.4 6.4 C7 7 6.7 7.6 6.6 8.4 C6.4 9.4 6.3 10.4 6.2 11.5 C6 12.3 5.6 12.9 5.1 13.4 L3.9 15.4 L2.3 16.9 L0.8 18 L0 18 Z" fill="#ffe205"/><path d="M0 9 L3 8 L5 11 L4.5 13.5 L2.3 16.9 L0.8 18 L0 18 Z" fill="#ffd000"/></svg>
<div class="ttl" style="left:852.1px;top:56.3px">Stack</div>
<div class="wb" style="left:1140px;top:52.5px;width:37.5px;height:22.5px"></div>
<div class="a" style="left:1151.25px;top:62.3px;width:14px;height:7px;background:#fafafa;border:1px solid #9aa3ad;border-radius:1.5px"></div>
<div class="wb" style="left:1178.5px;top:52.5px;width:38.2px;height:22.5px"></div>
<div class="a" style="left:1191px;top:58.5px;width:13.6px;height:10.6px;background:#bccfe3;border:3px solid #fafafa;outline:1px solid #9aa3ad;border-radius:1px"></div>
<div class="wb" style="left:1217.8px;top:52.5px;width:38.2px;height:22.5px"></div>
<svg style="left:1228.6px;top:57.5px" width="16" height="13" viewBox="0 0 16 13"><path d="M0.8 0.8 L5 0.8 L8 4 L11 0.8 L15.2 0.8 L10.3 6.5 L15.2 12.2 L11 12.2 L8 9 L5 12.2 L0.8 12.2 L5.7 6.5 Z" fill="#fafafa" stroke="#9aa3ad" stroke-width="1"/></svg>
<div class="wc" style="left:831px;top:77px;width:426px;height:501.5px"></div>
<div class="t" style="left:841px;top:91.4px;">Name</div>
<div class="inp" style="left:890px;top:89.5px;width:360.5px;height:18px"></div>
<div class="t" style="left:893px;top:91.2px;">LP Flare</div>
<div class="a" style="left:835.3px;top:122.4px;width:43.672px;height:17px;background:#f2f2f2;border:1px solid #e8e8e8;border-bottom:none"></div>
<div class="t" style="left:838.8px;top:123.9px;">Details</div>
<div class="page" style="left:832.5px;top:138.6px;width:422.5px;height:389.7px"></div>
<div class="a" style="left:877.5px;top:120.4px;width:71.688px;height:20.4px;background:#fff;border:1px solid #e3e3e3;border-bottom:none"></div>
<div class="t" style="left:882px;top:121.6px;">Sterile Area</div>
<div class="a" style="left:843px;top:153.5px;width:404.5px;height:98px;border:1px solid #ededed"></div>
<div class="a" style="left:846px;top:147px;width:45px;height:14px;background:#fff"></div>
<div class="t" style="left:848.3px;top:146.9px;">Options</div>
<div class="a" style="left:848.5px;top:166.5px;width:391.4px;height:74px;background:#fff;border:1px solid #9a9a9a"></div>
<div class="org" style="left:848.5px;top:167px;width:391.4px;height:18.3px"></div>
<div class="t" style="left:851.5px;top:169.2px;">Options</div>
<div class="t" style="left:851.5px;top:187.6px;">Sterile Area Elevation</div>
<div class="t" style="left:996.6px;top:187.6px;">m</div>
<div class="t" style="left:1118.5px;top:187.6px;color:#1a1aee">2.000</div>
<div class="a" style="left:849.5px;top:203.65px;width:389.4px;height:1px;background:#f0f0f0;"></div>
<div class="t" style="left:851.5px;top:205.95px;">Noise Basis</div>
<div class="t" style="left:1118.5px;top:205.95px;color:#a01ea0">Noise</div>
<div class="a" style="left:849.5px;top:222px;width:389.4px;height:1px;background:#f0f0f0;"></div>
<div class="t" style="left:851.5px;top:224.3px;">Calculate Sterile Area</div>
<div class="t" style="left:1118.5px;top:224.3px;color:#1a1aee">Yes</div>
<div class="a" style="left:994.3px;top:185.3px;width:1px;height:54px;background:#f2f2f2;"></div>
<div class="a" style="left:1220.2px;top:222.5px;width:19.2px;height:17.5px;background:#e4e4e4;border:1px solid #bdbdbd"></div>
<svg style="left:1226px;top:229px" width="8" height="5" viewBox="0 0 8 5"><path d="M0.7 0.7 L4 4 L7.3 0.7" fill="none" stroke="#555" stroke-width="1"/></svg>
<div class="a" style="left:843px;top:266.5px;width:404.5px;height:245px;border:1px solid #ededed"></div>
<div class="a" style="left:846px;top:260px;width:66px;height:14px;background:#fff"></div>
<div class="t" style="left:847.8px;top:260.2px;">Sterile Area</div>
<div class="a" style="left:853.3px;top:279.3px;width:223.7px;height:160px;background:#fff;border:1px solid #c8c8c8"></div>
<div class="org" style="left:853.3px;top:279.7px;width:223.7px;height:36.8px"></div>
<div class="t" style="left:856px;top:281.6px;">Radiation Limit</div>
<div class="t" style="left:967.2px;top:281.6px;">Distance To Limit</div>
<div class="t" style="left:856px;top:300px;">kW/m2</div>
<div class="t" style="left:967.2px;top:300px;">m</div>
<div class="t" style="left:856px;top:318.3px;color:#1a1aee">1.600</div>
<div class="t" style="left:967.2px;top:318.3px;">224.8</div>
<div class="t" style="left:856px;top:336.7px;color:#1a1aee">3.200</div>
<div class="t" style="left:967.2px;top:336.7px;">128.7</div>
<div class="t" style="left:856px;top:355.1px;color:#1a1aee">4.700</div>
<div class="t" style="left:967.2px;top:355.1px;">Limit Not Reached</div>
<div class="a" style="left:854.3px;top:334.9px;width:221.7px;height:1px;background:#f4f4f4;"></div>
<div class="a" style="left:854.3px;top:353.3px;width:221.7px;height:1px;background:#f4f4f4;"></div>
<div class="a" style="left:854.3px;top:371.7px;width:221.7px;height:1px;background:#f4f4f4;"></div>
<div class="a" style="left:854.3px;top:390.1px;width:221.7px;height:1px;background:#f4f4f4;"></div>
<div class="a" style="left:854.3px;top:408.5px;width:221.7px;height:1px;background:#f4f4f4;"></div>
<div class="a" style="left:854.3px;top:426.9px;width:221.7px;height:1px;background:#f4f4f4;"></div>
<div class="a" style="left:964px;top:316.5px;width:1px;height:122px;background:#f4f4f4;"></div>
<div class="btn" style="left:1099.4px;top:281.6px;width:140.3px;height:22.2px;line-height:20.2px">Export</div>
<div class="a" style="left:1099.1px;top:316.1px;width:15.2px;height:15.2px;border-radius:50%;background:#fff;border:1.4px solid #333"></div>
<div class="a" style="left:1102.9px;top:319.9px;width:7.6px;height:7.6px;border-radius:50%;background:#222"></div>
<div class="t" style="left:1119.2px;top:317px;">Radiation</div>
<div class="a" style="left:1099.1px;top:340.7px;width:15.2px;height:15.2px;border-radius:50%;background:#fff;border:1.4px solid #333"></div>
<div class="t" style="left:1119.2px;top:341.6px;">Noise</div>
<div class="t" style="left:1096.4px;top:392.8px;">Sterile Area is for this</div>
<div class="t" style="left:1096.4px;top:406.6px;">stack only and excludes</div>
<div class="t" style="left:1096.33px;top:437.7px;">Distance is downwind</div>
<div class="t" style="left:1096.43px;top:451.8px;">relative to the stack base;</div>
<div class="t" style="left:1096.76px;top:465.8px;">wind rotated to point into</div>
<div class="a" style="left:1188px;top:548.8px;width:14.3px;height:14.3px;background:#fff;border:1.3px solid #333"></div>
<div class="t" style="left:1207.5px;top:549.3px;">Ignored</div>
<div class="win" style="left:746px;top:426px;width:441.2px;height:334px"></div>
<svg style="left:754.2px;top:436.6px" width="17.3" height="18" viewBox="0 0 17.3 18" preserveAspectRatio="none"><rect width="17.3" height="18" fill="#15114f"/><rect width="17.3" height="3" fill="#0b0b38"/><path d="M7.2 6.8 L9.4 6.4 L11.8 9.6 L12.7 12.8 L13 15 L6 15 Z" fill="#1c1a30"/><path d="M4.6 14 L6.6 12.3 L9 13.2 L10.5 11.5 L12.5 13.3 L14.9 14.4 L14.2 17.4 L2.6 17.4 Z" fill="#9a3c12"/><path d="M8.2 13.2 L9.6 9 L10.6 13.4 Z" fill="#3a3a40"/><path d="M0 3.6 L1.2 3.2 L2.3 4.5 L3.5 3.4 L5.1 4.4 L6.2 2.9 C7 2.2 7.4 2.1 7.8 2.1 C9 2 10 2.6 10.9 3.3 C12 4.2 12.8 5.4 13.2 6.4 C14.2 8 14.8 9.2 14.8 10.3 C15 11.6 14.8 12.8 14.4 13.8 L13.2 14.6 C13 13.8 12.8 13.2 12.5 12.6 C12.4 11.4 12.2 10.4 11.7 9.5 C11 8.2 10.2 7.2 9.3 6.4 C8.6 6 8 6 7.4 6.4 C7 7 6.7 7.6 6.6 8.4 C6.4 9.4 6.3 10.4 6.2 11.5 C6 12.3 5.6 12.9 5.1 13.4 L3.9 15.4 L2.3 16.9 L0.8 18 L0 18 Z" fill="#ffe205"/><path d="M0 9 L3 8 L5 11 L4.5 13.5 L2.3 16.9 L0.8 18 L0 18 Z" fill="#ffd000"/></svg>
<div class="ttl" style="left:774.5px;top:438.3px">Tip</div>
<div class="wb" style="left:1062.5px;top:435.3px;width:37.8px;height:21.7px"></div>
<div class="a" style="left:1073.9px;top:445.1px;width:14px;height:7px;background:#fafafa;border:1px solid #9aa3ad;border-radius:1.5px"></div>
<div class="wb" style="left:1101.5px;top:435.3px;width:37.8px;height:21.7px"></div>
<div class="a" style="left:1113.8px;top:441.3px;width:13.6px;height:10.6px;background:#bccfe3;border:3px solid #fafafa;outline:1px solid #9aa3ad;border-radius:1px"></div>
<div class="wb" style="left:1140.5px;top:435.3px;width:38.3px;height:21.7px"></div>
<svg style="left:1151.35px;top:440.3px" width="16" height="13" viewBox="0 0 16 13"><path d="M0.8 0.8 L5 0.8 L8 4 L11 0.8 L15.2 0.8 L10.3 6.5 L15.2 12.2 L11 12.2 L8 9 L5 12.2 L0.8 12.2 L5.7 6.5 Z" fill="#fafafa" stroke="#9aa3ad" stroke-width="1"/></svg>
<div class="wc" style="left:752.7px;top:460px;width:426.3px;height:300px"></div>
<div class="t" style="left:762.5px;top:474.4px;">Name</div>
<div class="inp" style="left:817px;top:471.6px;width:313.5px;height:17.6px"></div>
<div class="t" style="left:820px;top:474.2px;">Pipe Flare_GPF 250t-h</div>
<div class="btn" style="left:1139.8px;top:464.8px;width:34.8px;height:33.2px"></div>
<svg style="left:1151px;top:475.5px" width="13" height="11" viewBox="0 0 13 11"><rect width="13" height="11" fill="#eef0f8"/><path d="M0 11 L3 7 L5 8 L8 4 L10 5 L13 1 V11Z" fill="#e89aa0"/><path d="M0 10 L3 6.5 L5 7.5 L8 3.5 L10 4.5 L13 0.8" fill="none" stroke="#d03a48" stroke-width="1"/><path d="M0.5 0 V10.5 H13" fill="none" stroke="#8a92c8" stroke-width="1"/></svg>
<div class="a" style="left:757.5px;top:502.4px;width:81.016px;height:17px;background:#f2f2f2;border:1px solid #e8e8e8;border-bottom:none"></div>
<div class="t" style="left:761px;top:503.9px;">Noise Results</div>
<div class="a" style="left:838.5px;top:502.4px;width:78.364px;height:17px;background:#f2f2f2;border:1px solid #e8e8e8;border-bottom:none"></div>
<div class="t" style="left:842px;top:503.9px;">Flame Shape</div>
<div class="a" style="left:915.8px;top:502.4px;width:114.364px;height:17px;background:#f2f2f2;border:1px solid #e8e8e8;border-bottom:none"></div>
<div class="t" style="left:919.3px;top:503.9px;">Combustion Results</div>
<div class="a" style="left:1029.7px;top:502.4px;width:64.36px;height:17px;background:#f2f2f2;border:1px solid #e8e8e8;border-bottom:none"></div>
<div class="t" style="left:1033.2px;top:503.9px;">Purge Gas</div>
<div class="a" style="left:757.5px;top:519.8px;width:43.672px;height:17px;background:#f2f2f2;border:1px solid #e8e8e8;border-bottom:none"></div>
<div class="t" style="left:761px;top:521.3px;">Details</div>
<div class="a" style="left:800.5px;top:519.8px;width:67.696px;height:17px;background:#f2f2f2;border:1px solid #e8e8e8;border-bottom:none"></div>
<div class="t" style="left:804px;top:521.3px;">Noise Input</div>
<div class="a" style="left:868.5px;top:519.8px;width:156.388px;height:17px;background:#f2f2f2;border:1px solid #e8e8e8;border-bottom:none"></div>
<div class="t" style="left:872px;top:521.3px;">Location &amp; Dimensions</div>
<div class="a" style="left:997.3px;top:519.8px;width:39.004px;height:17px;background:#f2f2f2;border:1px solid #e8e8e8;border-bottom:none"></div>
<div class="t" style="left:1000.8px;top:521.3px;">Fluids</div>
<div class="a" style="left:1036.9px;top:519.8px;width:61.672px;height:17px;background:#f2f2f2;border:1px solid #e8e8e8;border-bottom:none"></div>
<div class="t" style="left:1040.4px;top:521.3px;">Emissions</div>
<div class="page" style="left:754px;top:538px;width:424px;height:200px"></div>
<div class="a" style="left:1096.9px;top:516.8px;width:49.408px;height:22.7px;background:#fff;border:1px solid #e3e3e3;border-bottom:none"></div>
<div class="t" style="left:1101.6px;top:518.8px;">Results</div>
<div class="a" style="left:765px;top:548.5px;width:406px;height:200px;border:1px solid #ededed"></div>
<div class="a" style="left:768px;top:542px;width:64px;height:14px;background:#fff"></div>
<div class="t" style="left:770.4px;top:542.1px;">Tip Results</div>
<div class="a" style="left:770.4px;top:559px;width:392.4px;height:200px;background:#fff;border:1px solid #9c9c9c"></div>
<div class="org" style="left:770.4px;top:559.6px;width:392.4px;height:18.6px"></div>
<div class="t" style="left:773.8px;top:561.9px;">Exit Properties</div>
<div class="t" style="left:773.8px;top:580.3px;">Exit Velocity</div>
<div class="t" style="left:918.5px;top:580.3px;">m/s</div>
<div class="t" style="left:1041.7px;top:580.3px;">91.82</div>
<div class="a" style="left:771.4px;top:596.27px;width:390.4px;height:1px;background:#f4f4f4;"></div>
<div class="t" style="left:773.8px;top:598.67px;">Mach Number</div>
<div class="t" style="left:1041.7px;top:598.67px;">0.2956</div>
<div class="a" style="left:771.4px;top:614.64px;width:390.4px;height:1px;background:#f4f4f4;"></div>
<div class="t" style="left:773.8px;top:617.04px;">Actual Volume Flow</div>
<div class="t" style="left:918.5px;top:617.04px;">m3/h</div>
<div class="t" style="left:1041.7px;top:617.04px;">217078</div>
<div class="a" style="left:771.4px;top:633.01px;width:390.4px;height:1px;background:#f4f4f4;"></div>
<div class="t" style="left:773.8px;top:635.41px;">Calculated F Factor</div>
<div class="t" style="left:1041.7px;top:635.41px;">0.3126</div>
<div class="a" style="left:771.4px;top:651.38px;width:390.4px;height:1px;background:#f4f4f4;"></div>
<div class="t" style="left:773.8px;top:653.78px;">Contraction Coefficient</div>
<div class="t" style="left:1041.7px;top:653.78px;">1.000</div>
<div class="a" style="left:771.4px;top:669.75px;width:390.4px;height:1px;background:#f4f4f4;"></div>
<div class="t" style="left:773.8px;top:672.15px;">Exit Temperature</div>
<div class="t" style="left:918.5px;top:672.15px;">C</div>
<div class="t" style="left:1041.7px;top:672.15px;">159.7</div>
<div class="a" style="left:916px;top:578px;width:1px;height:110px;background:#f3f3f3;"></div>
<div class="a" style="left:1038px;top:578px;width:1px;height:110px;background:#f5f5f5;"></div>
<div class="org" style="left:770.4px;top:688.9px;width:392.4px;height:18.6px"></div>
<div class="t" style="left:773.8px;top:691.2px;">Flame Results</div>
<div class="t" style="left:773.8px;top:708.5px;">Heat Release</div>
<div class="t" style="left:918.5px;top:708.5px;">kW</div>
<div class="t" style="left:1041.7px;top:708.5px;">3.229E+06</div>
</body></html>
